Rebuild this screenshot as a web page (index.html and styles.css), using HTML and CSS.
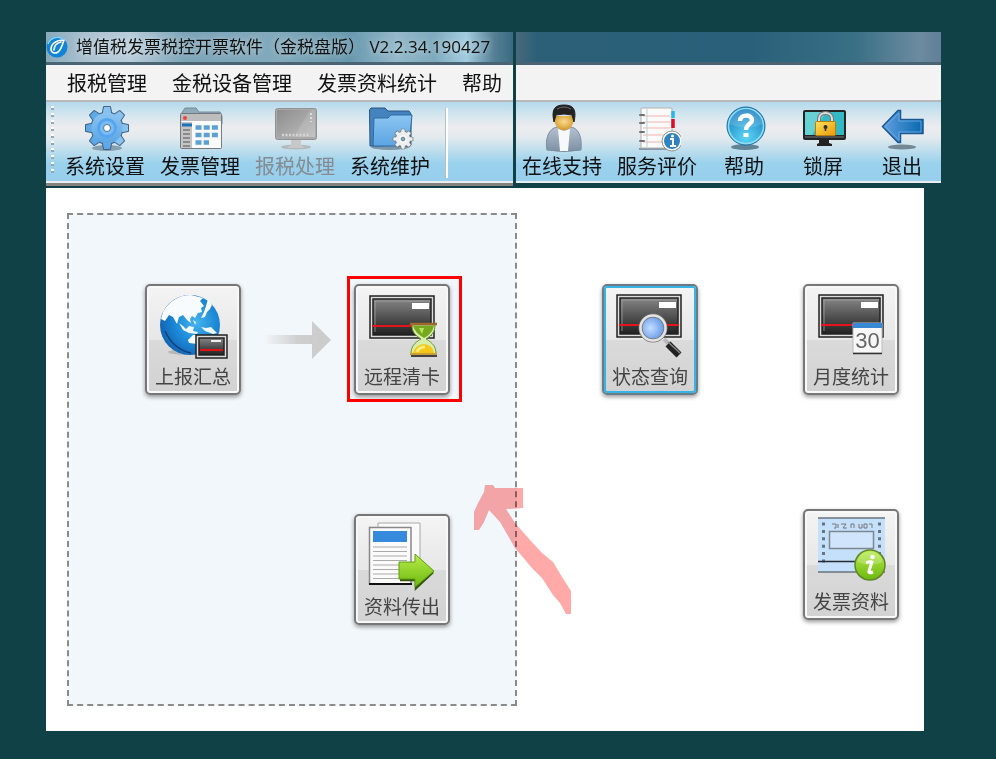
FILE: index.html
```html
<!DOCTYPE html>
<html lang="zh-CN">
<head>
<meta charset="utf-8">
<meta name="viewport" content="width=device-width, initial-scale=1">
<title>增值税发票税控开票软件</title>
<link rel="stylesheet" href="styles.css">
</head>
<body>
<svg class="defs" aria-hidden="true">
  <defs>
    <linearGradient id="blue" x1="0" y1="0" x2="0" y2="1"><stop offset="0" stop-color="#8cc4f0"/><stop offset="1" stop-color="#5ba6e4"/></linearGradient>
    <linearGradient id="gray" x1="0" y1="0" x2="1" y2="1"><stop offset="0" stop-color="#8e8e8e"/><stop offset="1" stop-color="#bcbcbc"/></linearGradient>
    <linearGradient id="dark" x1="0" y1="0" x2="0" y2="1"><stop offset="0" stop-color="#858585"/><stop offset="1" stop-color="#202020"/></linearGradient>
    <linearGradient id="green" x1="0" y1="0" x2="0" y2="1"><stop offset="0" stop-color="#b9ec4e"/><stop offset="1" stop-color="#6cb80c"/></linearGradient>
    <linearGradient id="gold" x1="0" y1="0" x2="1" y2="1"><stop offset="0" stop-color="#ffdf5a"/><stop offset="1" stop-color="#e89a08"/></linearGradient>
    <linearGradient id="coat" x1="0" y1="0" x2="0" y2="1"><stop offset="0" stop-color="#b9c7d4"/><stop offset="1" stop-color="#7c8fa3"/></linearGradient>
    <linearGradient id="fade" x1="0" y1="0" x2="1" y2="0"><stop offset="0" stop-color="#cfcfcf" stop-opacity="0"/><stop offset=".5" stop-color="#cfcfcf"/><stop offset="1" stop-color="#cbcbcb"/></linearGradient>
    <linearGradient id="exit" x1="0" y1="0" x2="1" y2="0"><stop offset="0" stop-color="#5f9fe0"/><stop offset="1" stop-color="#0868ae"/></linearGradient>
    <radialGradient id="globe" cx=".6" cy=".45" r=".6"><stop offset="0" stop-color="#45b4ee"/><stop offset=".6" stop-color="#1b87d6"/><stop offset="1" stop-color="#1366b4"/></radialGradient>
    <radialGradient id="lens" cx=".4" cy=".5" r=".6"><stop offset="0" stop-color="#c3deff"/><stop offset="1" stop-color="#5c90e6"/></radialGradient>
    <radialGradient id="face" cx=".5" cy=".4" r=".6"><stop offset="0" stop-color="#f8dc92"/><stop offset="1" stop-color="#d39624"/></radialGradient>
    <radialGradient id="ball" cx=".5" cy=".8" r=".8"><stop offset="0" stop-color="#5cd6f6"/><stop offset="1" stop-color="#1578bd"/></radialGradient>
    <g id="cog">
      <path d="M-4-16 -3-21H3L4-16V16L3 21H-3L-4 16Z"/>
      <path d="M-4-16 -3-21H3L4-16V16L3 21H-3L-4 16Z" transform="rotate(45)"/>
      <path d="M-4-16 -3-21H3L4-16V16L3 21H-3L-4 16Z" transform="rotate(90)"/>
      <path d="M-4-16 -3-21H3L4-16V16L3 21H-3L-4 16Z" transform="rotate(135)"/>
      <circle r="15.500"/>
    </g>
    <g id="card">
      <rect x="15" y="11" width="64" height="42" fill="#ddd" stroke="#222" stroke-width="1.500"/>
      <rect x="18" y="14" width="58" height="36" fill="url(#dark)" stroke="#222" stroke-width="1.500"/>
      <path d="M20 47V16H75" fill="none" stroke="#aaa" stroke-width=".7"/>
      <rect x="57" y="18" width="17" height="6" fill="#fff"/>
      <path d="M17 41H77" stroke="#e3141a" stroke-width="1.800"/>
    </g>
  </defs>
</svg>

<div class="page">
  <header class="window">
    <section class="pane pane-left">
      <div class="titlebar">
        <svg class="logo" viewBox="0 0 22 22" aria-hidden="true"><circle cx="11" cy="11" r="10.500" fill="#1284d6"/><path d="M2 8A10 10 0 0 1 17 3" fill="none" stroke="#8bd0f4" stroke-width="1.500"/><path d="M18 4C10 4 5 8 5 13c0 4 4 5 7 3 3-2 4-6 6-12M8 14C8 10 11 7 15 6" fill="none" stroke="#fff" stroke-width="1.600" stroke-linecap="round"/></svg>
        <h1>增值税发票税控开票软件（金税盘版） V2.2.34.190427</h1>
      </div>
      <nav class="menu">
        <button type="button">报税管理</button>
        <button type="button">金税设备管理</button>
        <button type="button">发票资料统计</button>
        <button type="button">帮助</button>
      </nav>
      <div class="toolbar">
        <span class="grip"></span>
        <button type="button" class="tool">
          <svg viewBox="0 0 48 48" aria-hidden="true"><ellipse cx="26" cy="44" rx="15" ry="3" fill="#5b7484" opacity=".6"/><g transform="translate(26 24)"><use href="#cog" stroke="#3f6288" stroke-width="2" stroke-linejoin="round"/><use href="#cog" fill="url(#blue)"/><circle r="10" fill="#57a5ee"/><circle r="7" fill="#79bbf3"/><circle r="3.500" fill="#fff" stroke="#53768f"/></g></svg>
          <span>系统设置</span>
        </button>
        <button type="button" class="tool">
          <svg viewBox="0 0 48 48" aria-hidden="true"><path d="M5 10 9 4H20L23 8H44L46 12V20H5Z" fill="#91a9ba" stroke="#758b9b"/><rect x="4.500" y="9.500" width="41" height="35" rx="1" fill="#fafafa" stroke="#727a80"/><path d="M5 10H45V17H5Z" fill="#bdbdbd"/><circle cx="9" cy="14" r="2" fill="#ef4444"/><path d="M5 18H16V44H5Z" fill="#c4c4c4"/><path d="M6 21H16" stroke="#1c71bb" stroke-width="3"/><path d="M7 26H14M7 30H14M7 34H14M7 38H14M7 42H14" stroke="#777" stroke-width="1.500"/><path d="M19.500 23.500H42M19.500 31H42M19.500 38.500H33" stroke="#5da1d3" stroke-width="4.500" stroke-dasharray="6 2.200"/></svg>
          <span>发票管理</span>
        </button>
        <button type="button" class="tool" disabled>
          <svg viewBox="0 0 48 48" aria-hidden="true"><ellipse cx="25" cy="43" rx="15" ry="2.500" fill="#aaa" opacity=".7"/><path d="M20 35H30V41L34 44H16L20 41Z" fill="#c8c8c8"/><rect x="4.500" y="4.500" width="41" height="31" rx="2" fill="#aaa" stroke="#929292"/><rect x="6" y="6" width="38" height="27" fill="url(#gray)"/><path d="M39 6 23 33H44V6Z" fill="#fff" opacity=".12"/><path d="M11 31H39" stroke="#d5d5d5" stroke-width="2.500" stroke-dasharray="2 1.500"/><path d="M40 9V18" stroke="#ddd" stroke-width="2" stroke-dasharray="2 2"/></svg>
          <span>报税处理</span>
        </button>
        <button type="button" class="tool">
          <svg viewBox="0 0 48 48" aria-hidden="true"><ellipse cx="24" cy="43" rx="19" ry="3" fill="#4b6578" opacity=".6"/><path d="M4 42 3.500 6 5 4H19L22 7H43L45 10V41Z" fill="#4583be" stroke="#265782"/><path d="M7 42 8 14H22L25 11H46L43 42Z" fill="url(#blue)" stroke="#2d6ca4"/><g transform="translate(37 35) scale(.46)"><use href="#cog" stroke="#707a80" stroke-width="3"/><use href="#cog" fill="#eee"/><circle r="8" fill="#fafafa"/><circle r="4" fill="#6ab3e7" stroke="#657580" stroke-width="2"/></g></svg>
          <span>系统维护</span>
        </button>
        <span class="separator"></span>
      </div>
    </section>
    <section class="pane pane-right">
      <div class="titlebar"></div>
      <div class="menu"></div>
      <div class="toolbar">
        <button type="button" class="tool">
          <svg viewBox="0 0 48 48" aria-hidden="true"><path d="M9 46C7 36 10 27 16 24L26 21 36 24C42 27 44 36 43 46Q26 49 9 46Z" fill="url(#coat)" stroke="#7d8e9e"/><path d="M20 25 26 27 32 25 30 47H22Z" fill="#f7f8fa"/><path d="M16 12H36C37 31 15 31 16 12Z" fill="url(#face)"/><path d="M16 18C13 5 17 1 26 1S39 5 36 18L34 11Q26 9 18 11Z" fill="#222" stroke="#222"/><path d="M19 5Q26 1 33 5" stroke="#6c6c6c" fill="none"/></svg>
          <span>在线支持</span>
        </button>
        <button type="button" class="tool">
          <svg viewBox="0 0 48 48" aria-hidden="true"><path d="M6 45H40" stroke="#8098a7" stroke-width="2"/><rect x="8" y="4" width="31" height="40" rx="1" fill="#fafafa" stroke="#b0b0b0"/><path d="M10 12H37M10 18H37M10 24H37M10 31H37M10 38H30" stroke="#f2b4af"/><path d="M14 5V43" stroke="#a5dcdf"/><path d="M7 11H11M7 19H11M7 28H11M7 37H11" stroke="#727272" stroke-width="2" stroke-linecap="round"/><path d="M40 7V14" stroke="#27b5e8" stroke-width="3.500"/><path d="M40 15V24" stroke="#d90e28" stroke-width="3.500"/><circle cx="39" cy="37" r="9" fill="#2f83bf" stroke="#fff" stroke-width="2"/><circle cx="39" cy="37" r="10" fill="none" stroke="#8c948e"/><circle cx="39.500" cy="32" r="1.500" fill="#fff"/><path d="M37 35H40V42M37 42H43" stroke="#fff" stroke-width="2" fill="none"/></svg>
          <span>服务评价</span>
        </button>
        <button type="button" class="tool">
          <svg viewBox="0 0 48 48" aria-hidden="true"><ellipse cx="25" cy="43" rx="14" ry="3" fill="#345b70" opacity=".7"/><circle cx="26" cy="22" r="19" fill="url(#ball)" stroke="#1c6f9f"/><circle cx="26" cy="22" r="17.500" fill="none" stroke="#8ddcf3" stroke-width="1.500"/><path d="M9 20C11 1 41 1 43 20Q26 27 9 20Z" fill="#fff" opacity=".15"/><path d="M20 17C20 10 32 10 32 16 32 20 26 20 26 26" fill="none" stroke="#fff" stroke-width="4.500"/><path d="M26 29V33" stroke="#fff" stroke-width="5"/></svg>
          <span>帮助</span>
        </button>
        <button type="button" class="tool">
          <svg viewBox="0 0 48 48" aria-hidden="true"><path d="M20 35H30V39L33 40V42H18V40L20 39Z" fill="#222"/><rect x="4" y="6" width="43" height="30" rx="2" fill="#242424"/><path d="M6 8H45V31H6Z" fill="#32b9c4"/><path d="M6 8H27L13 31H6Z" fill="#67d2d6"/><path d="M6 33H45" stroke="#777"/><path d="M20 18V15C20 7 33 7 33 15V18" fill="none" stroke="#777" stroke-width="4"/><path d="M20 18V15C20 7 33 7 33 15V18" fill="none" stroke="#ddd" stroke-width="2"/><rect x="16.500" y="17.500" width="20" height="14" rx="1" fill="url(#gold)" stroke="#b87c08"/><circle cx="26.500" cy="23" r="2" fill="#303020"/><path d="M26.500 23V27" stroke="#303020" stroke-width="1.500"/></svg>
          <span>锁屏</span>
        </button>
        <button type="button" class="tool">
          <svg viewBox="0 0 48 48" aria-hidden="true"><ellipse cx="24" cy="43" rx="14" ry="2.500" fill="#50636e" opacity=".7"/><path d="M4.500 22.500 20 6.500H22.500V15.500H45V29.500H22.500V38.500H20Z" fill="url(#exit)" stroke="#1c5795" stroke-width="1.500"/><path d="M7 22.500 21 9V17H43V28H21V36Z" fill="none" stroke="#74b4ea" stroke-width=".8"/></svg>
          <span>退出</span>
        </button>
      </div>
    </section>
  </header>

  <main class="workspace">
    <section class="flow">
      <div class="steps">
        <button type="button" class="tile">
          <svg viewBox="2 2 92 76" aria-hidden="true"><ellipse cx="43" cy="68" rx="20" ry="3" fill="#888" opacity=".4"/><circle cx="45" cy="41" r="30" fill="url(#globe)"/><path d="M18 28C24 17 34 11 46 11L58 14 55 17 59 22 56 24 57 28 53 29 50 34 47 32 45 35 46 39 42 36 38 31 34 33 32 40 28 33 24 31 20 37 16 35Z" fill="#f8fbfd"/><path d="M63 15 67 21 65 25 62 28 60 33 56 34 59 28 61 22Z" fill="#f8fbfd"/><path d="M34 39 38 42 41 45 44 42 49 43 48 47 53 48 52 50 44 49 38 46ZM48 36 51 38 50 41Z" fill="#eef8fd"/><path d="M56 43 61 44 66 43 72 49 68 50 60 47Z" fill="#eef8fd"/><path d="M43 56 48 51 53 51V60L44 59Z" fill="#f7fcfe"/><path d="M20 47Q28 65 46 69" stroke="#123f74" fill="none" stroke-width="1.500"/><rect x="51" y="51" width="31" height="23" fill="#ddd" stroke="#222" stroke-width="1.500"/><rect x="54" y="54" width="25" height="17" fill="url(#dark)" stroke="#222" stroke-width="1.500"/><path d="M66 57H76" stroke="#eee" stroke-width="2"/><path d="M55 66H78" stroke="#df1113" stroke-width="2"/></svg>
          <span>上报汇总</span>
        </button>
        <svg class="next" viewBox="0 0 68 42" aria-hidden="true"><path d="M0 16H48V2L67 21 48 40V25H0Z" fill="url(#fade)"/></svg>
        <div class="marked">
          <button type="button" class="tile">
            <svg viewBox="2 2 92 76" aria-hidden="true"><use href="#card" x="1" y="1"/><path d="M58 41H81C81 48 78 51 72 55 79 59 82 63 82 70H57C57 63 60 59 67 55 61 51 58 48 58 41Z" fill="#d7efaa" stroke="#6d932b"/><path d="M59 42H80Q78 50 70 54 61 49 59 42Z" fill="#76a820"/><path d="M65 44H70L68 50Z" fill="#b8e261"/><path d="M59 69Q61 61 70 60 79 61 80 69Z" fill="#f5c719"/><path d="M63 68Q65 63 71 63" stroke="#ffec79" stroke-width="3" fill="none"/><path d="M56 40H83" stroke="#9b692b" stroke-width="2.500"/><path d="M56 70H83" stroke="#c7a038" stroke-width="2"/><path d="M57 72H83" stroke="#111" stroke-width="1.500"/></svg>
            <span>远程清卡</span>
          </button>
        </div>
      </div>
      <button type="button" class="tile tile-export">
        <svg viewBox="2 2 92 76" aria-hidden="true"><path d="M24 9H66V65H24Z" fill="#fafafa" stroke="#a8a8a8"/><path d="M15.500 13.500H57V70H15.500Z" fill="#fbfbfb" stroke="#888" stroke-width="1.500"/><path d="M15 70H58" stroke="#111" stroke-width="2"/><path d="M19 17H53V28H19Z" fill="#358ade"/><path d="M19 33H53M19 37.500H53M19 42H53M19 46.500H53M19 51H46M19 55.500H46M19 60H46M19 64.500H46" stroke="#aaa"/><path d="M46 66H62V74L79 58" fill="none" stroke="#35570e" stroke-width="2.500"/><path d="M45 48H61V40L80 57 61 73V65H45Z" fill="url(#green)" stroke="#5f9f12"/></svg>
        <span>资料传出</span>
      </button>
    </section>
    <section class="queries">
      <button type="button" class="tile tile-focus">
        <svg viewBox="2 2 92 76" aria-hidden="true"><use href="#card"/><path d="M62 55 67 60" stroke="#bbb" stroke-width="4"/><path d="M66 60 77 71" stroke="#222" stroke-width="7"/><path d="M66 58 78 69" stroke="#888" stroke-width="1.500"/><circle cx="51" cy="44" r="12.500" fill="url(#lens)" stroke="#777" stroke-width="4"/><circle cx="51" cy="44" r="12.500" fill="none" stroke="#e4e4e4" stroke-width="2.500"/></svg>
        <span>状态查询</span>
      </button>
      <button type="button" class="tile">
        <svg viewBox="2 2 92 76" aria-hidden="true"><use href="#card" x="1"/><path d="M50 39H79V69H50Z" fill="#f7f7f7" stroke="#bbb"/><path d="M50 39H79V44H50Z" fill="#3889d5"/><path d="M50 69.500H79" stroke="#333" stroke-width="1.500"/><text x="64.500" y="64" class="day">30</text></svg>
        <span>月度统计</span>
      </button>
      <button type="button" class="tile tile-invoice">
        <svg viewBox="2 2 92 76" aria-hidden="true"><path d="M15 9H82V63H15Z" fill="#c5e0fb"/><path d="M15 9H82M15 63H82" stroke="#6a737c" stroke-width="1.500"/><path d="M20.500 13.500V58M76.500 13.500V50" stroke="#667482" stroke-width="3" stroke-dasharray="3 4.400"/><rect x="26.500" y="22.500" width="44" height="17" fill="#d0e5fb" stroke="#7c8790" stroke-width="1.500"/><path d="M15 52.500H60" stroke="#252b32" stroke-width="1.500"/><path d="M29 15H33V19H31M35 15V19M38 15H43L40 19H44M48 19V15H51V19M56 15V19H59V15M61 15H64V19H61ZM66 15H69V19" fill="none" stroke="#777"/><circle cx="67" cy="56" r="15" fill="url(#green)" stroke="#62852b" stroke-width="1.500"/><path d="M54 53C56 39 77 39 80 53Q67 58 54 53Z" fill="#fff" opacity=".2"/><circle cx="69.500" cy="48" r="2.300" fill="#fff"/><path d="M63 54Q67 52 69 53L66 62Q65 65 70 63" fill="none" stroke="#fff" stroke-width="3"/></svg>
        <span>发票资料</span>
      </button>
    </section>
    <svg class="pointer" viewBox="0 0 98 130" aria-hidden="true"><path d="M11 0H19L21 3H49V23L32 24 41 38 56 55 68 68 79 77 88 92 97 106V129H92L86 118 79 110 68 93 58 83 41 63 26 37 15 25 10 37 5 45H0V27L4 18 10 7Z" fill="#ffa9a9"/></svg>
  </main>
</div>
</body>
</html>
```
FILE: styles.css
```css
* { box-sizing: border-box; }

body {
  margin: 0;
  background: #104146;
  color: #111;
  font-family: "Noto Sans CJK SC", "Noto Sans", sans-serif;
}

button {
  margin: 0;
  padding: 0;
  border: 0;
  background: none;
  color: inherit;
  font: inherit;
}

svg { display: block; }
.defs { position: absolute; width: 0; height: 0; }

.page { padding: 32px 55px 28px 46px; }

.window {
  display: grid;
  grid-template-columns: 467fr 425fr;
  gap: 3px;
  align-items: start;
}

.titlebar {
  display: flex;
  align-items: center;
  gap: 8px;
  height: 33px;
  border-bottom: 3px solid #4a6472;
  background: linear-gradient(90deg, #86a9ba 0, #a9c0d0 8%, #b9cddb 18%, #7ba3b7 30%, #83aabc 50%, #6898ad 65%, #94b9ca 75%, #7faabd 83%, #a3cce0 90%, #547f94 96%, #3b6b81 100%);
}

.pane-right .titlebar {
  background: linear-gradient(90deg, #49697c 0, #2b6078 5%, #2a6079 55%, #3a7086 80%, #6c8ba0 95%, #607f98 100%);
}

.logo { width: 22px; height: 22px; flex: none; }

h1 {
  margin: 0;
  font-family: "Open Sans", "Noto Sans CJK SC", sans-serif;
  font-size: 17px;
  font-weight: 400;
  line-height: 24px;
  white-space: nowrap;
  text-shadow: 0 0 6px #ffffff99;
}

.menu {
  display: flex;
  align-items: center;
  gap: 25px;
  height: 37px;
  padding-left: 21px;
  border-bottom: 2px solid #b9b9b9;
  background: #f3f3f3;
  font-size: 20px;
  line-height: 28px;
  white-space: nowrap;
}

.toolbar {
  display: flex;
  align-items: flex-start;
  gap: 15px;
  height: 81px;
  padding-top: 2px;
  border-bottom: 2px solid #e9eef0;
  background: linear-gradient(180deg, #b3d9ec 0, #d7e7ef 18%, #ececee 32%, #e3eaee 45%, #b5dbed 65%, #9ad1ed 78%, #96ceec 100%);
}

.pane-left { border-bottom: 3px solid #85817f; }
.pane-left .toolbar { padding-left: 5px; }
.pane-right .toolbar { padding-left: 6px; }

.grip {
  width: 3px;
  height: 70px;
  margin: 2px -4px 0 0;
  background: repeating-linear-gradient(180deg, #fff 0 2px, #91a9b5 2px 4px, transparent 4px 7px);
}

.separator {
  width: 3px;
  height: 70px;
  margin-top: 4px;
  border-left: 1px solid #b6c2c8;
  background: #fff;
}

.tool {
  display: flex;
  flex-direction: column;
  align-items: center;
  min-width: 64px;
  font-size: 20px;
  line-height: 28px;
  white-space: nowrap;
}

.tool svg { width: 48px; height: 48px; }
.tool:disabled { color: #858b90; }

.workspace {
  position: relative;
  display: grid;
  grid-template-columns: 450fr 382fr;
  margin: 2px 17px 0 0;
  padding: 25px;
  padding-left: 21px;
  background: #fff;
}

.flow {
  min-height: 493px;
  padding: 69px 65px 79px 76px;
  border: 2px dashed #8b8b8b;
  background: #f2f7fb;
}

.steps {
  display: flex;
  align-items: center;
  justify-content: space-between;
}

.next { width: 68px; height: 42px; }

.marked { position: relative; }

.marked::after {
  content: "";
  position: absolute;
  inset: -8px -12px -7px -7px;
  border: 3px solid #f00;
}

.tile {
  display: flex;
  flex-direction: column;
  align-items: center;
  width: 96px;
  height: 111px;
  border: 2px solid #777;
  border-radius: 5px;
  background: linear-gradient(180deg, #f4f4f4 0, #e7e7e7 50%, #dadada 51%, #d2d2d2 100%);
  box-shadow: 0 2px 4px #0006, inset 0 0 0 2px #f8f8f8;
  color: #444;
  font-size: 19px;
  line-height: 28px;
  white-space: nowrap;
}

.tile svg { width: 92px; height: 76px; flex: none; }
.tile-export { margin: 119px 0 0 auto; }
.tile-focus { border-color: #6b7c86; box-shadow: 0 2px 4px #0006, inset 0 0 0 2px #36b5e5; }

.queries {
  display: grid;
  grid-template-columns: 96px 96px;
  justify-content: space-between;
  align-content: start;
  row-gap: 114px;
  padding: 71px 0 0 85px;
}

.tile-invoice { grid-column: 2; }

.day {
  fill: #666;
  font: 22px "Liberation Sans", sans-serif;
  text-anchor: middle;
}

.pointer {
  position: absolute;
  left: 428px;
  top: 297px;
  width: 98px;
  height: 130px;
  mix-blend-mode: multiply;
  pointer-events: none;
}
```
